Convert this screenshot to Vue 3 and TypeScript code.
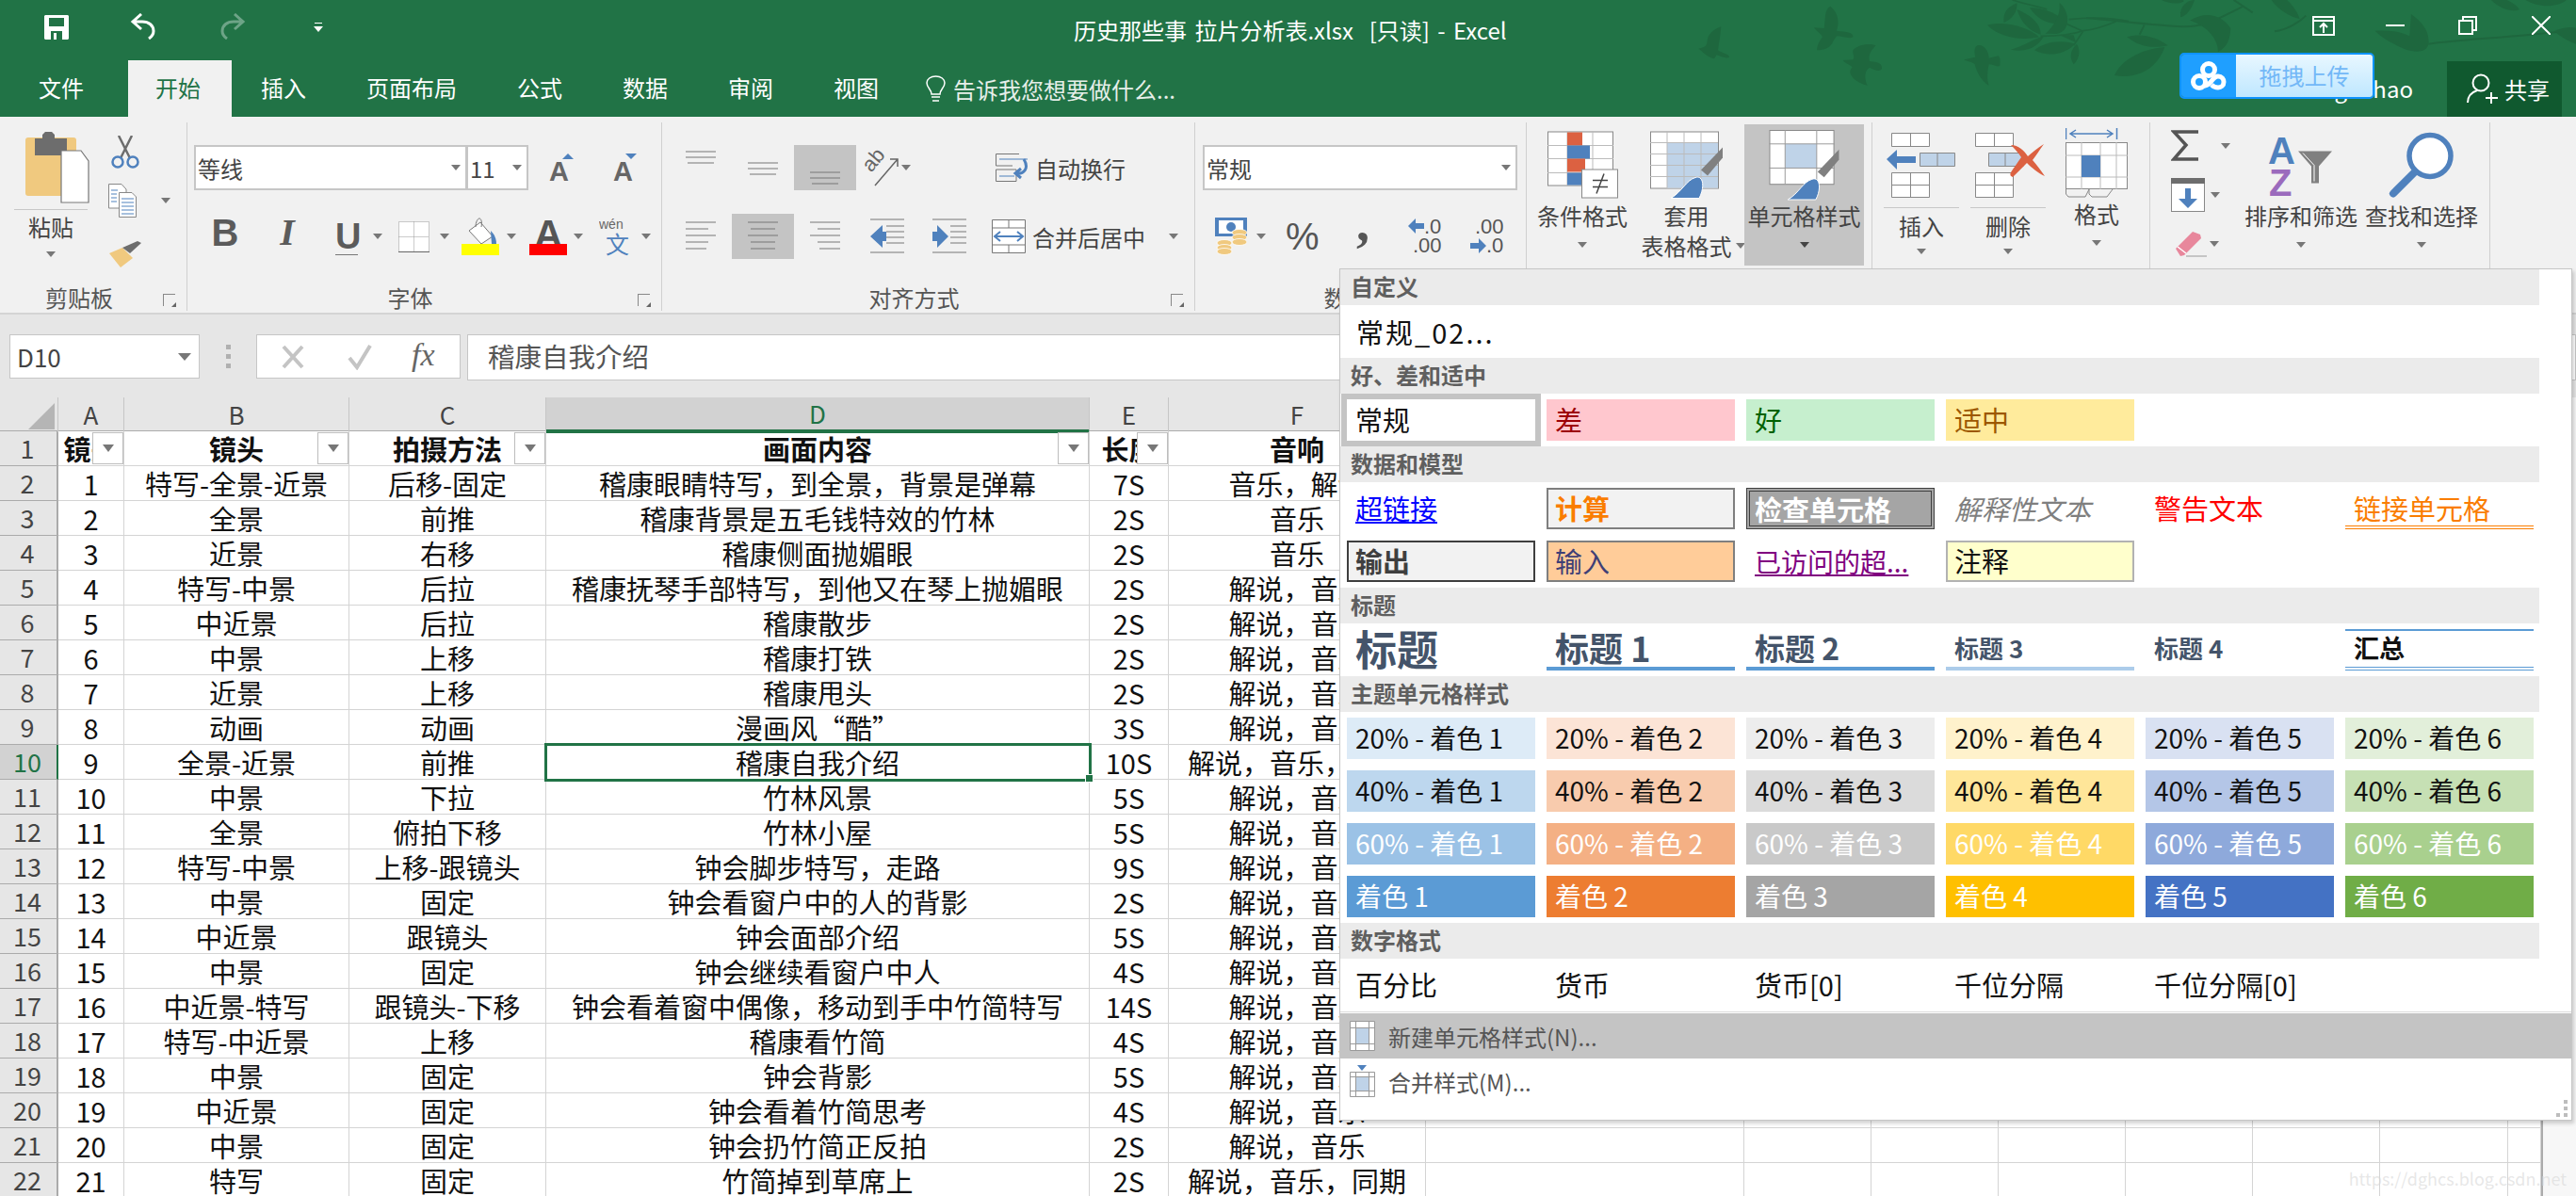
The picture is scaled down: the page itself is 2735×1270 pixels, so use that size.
<template>
  <div class="app">
    <!-- title bar + tabs -->
    <header class="chrome">
      <svg class="leaves" width="2735" height="124" viewBox="0 0 2735 124">
        <g transform="translate(1740 0) scale(0.3333)" fill="#1e673e">
          <path d="M262 85C235 95 220 110 218 130C216 145 215 150 190 155C205 165 215 180 240 187L248 175C262 180 275 187 288 183C290 172 265 170 252 160C256 135 260 110 262 85Z" />
          <path d="M610 20C590 30 595 60 590 90L558 88C565 100 580 105 585 118C575 130 568 145 567 160C590 160 610 155 620 130L630 115C650 115 670 125 682 118C684 102 660 102 630 98C640 70 635 40 610 20Z" />
          <path d="M755 145C730 135 695 145 682 160C680 175 690 180 682 190L650 192C660 205 675 205 680 215C668 225 672 240 690 255C705 265 715 270 728 272C718 250 718 225 735 215C750 222 765 230 774 220C775 205 770 198 735 195C730 175 740 160 755 145Z" />
          <path d="M1078 145C1065 155 1070 170 1072 182L1036 190C1045 197 1060 195 1070 205C1075 225 1090 260 1115 272C1108 250 1110 230 1115 205C1130 205 1140 215 1150 210C1153 195 1150 180 1145 178L1115 185C1115 165 1100 140 1078 145Z" />
          <path d="M1110 80C1160 65 1240 85 1275 118C1220 130 1150 120 1110 80Z" />
          <path d="M1185 158C1220 150 1255 125 1290 115C1275 145 1240 170 1185 158Z" />
          <path d="M1260 160C1290 135 1340 125 1390 140C1360 170 1310 185 1260 160Z" />
          <path d="M1205 30C1240 45 1280 70 1280 110C1245 100 1215 70 1205 30Z" />
          <path d="M1245 25C1290 20 1340 50 1365 70C1320 85 1275 70 1245 25Z" />
          <path d="M1340 8C1365 30 1375 70 1355 95C1335 115 1315 105 1295 108C1320 85 1345 50 1340 8Z" />
          <path d="M1205 10C1165 25 1160 50 1163 72C1190 60 1205 40 1205 10Z" />
          <path d="M1385 205C1370 180 1375 160 1395 140C1410 165 1400 190 1385 205Z" />
          <path d="M1340 112L1385 112L1392 135Z" />
          <path d="M1190 0C1250 20 1280 20 1300 30M1370 62C1430 55 1500 55 1560 68M1280 115C1330 115 1380 110 1415 98C1450 95 1480 85 1520 68M1415 100L1385 145M1360 75L1415 100" fill="none" stroke="#1e673e" stroke-width="5" />
        </g>
        <g transform="translate(2215 0) scale(0.3333)" fill="#1e673e">
          <path d="M0 58C100 65 200 80 310 85C380 85 420 60 500 20M170 110L185 80M1090 140C1200 125 1350 120 1560 95M600 100C640 95 680 70 700 50M470 0L530 40" fill="none" stroke="#1e673e" stroke-width="6" />
          <path d="M90 240C110 190 180 155 250 150C230 210 170 255 90 240Z" />
          <path d="M130 118C170 105 220 115 260 145C210 155 170 150 130 118Z" />
          <path d="M330 65C380 35 430 45 460 90C458 125 450 150 420 165C420 120 380 80 330 65Z" />
          <path d="M300 40C305 10 330 0 345 0C335 30 320 50 300 55Z" />
          <path d="M920 98C960 95 1000 100 1030 115L1035 45C1070 70 1095 100 1090 140C1085 170 1040 170 1000 150C970 135 940 120 920 98Z" />
          <path d="M590 0C610 30 650 55 680 60C670 30 650 10 640 0Z" />
          <path d="M1400 0C1440 25 1500 25 1530 0Z" />
          <path d="M1490 100C1520 85 1550 85 1560 90L1560 140C1530 130 1510 115 1490 100Z" />
          <path d="M1290 0C1320 30 1360 40 1380 30C1370 15 1350 5 1340 0Z" />
          <path d="M240 0C260 10 290 15 310 5L310 0Z" />
        </g>
      </svg>

      <div class="title-row">
        <div class="qat">
          <svg class="qat-save" width="26" height="26" viewBox="0 0 26 26">
            <path d="M1 0H25L26 1V25L25 26H1L0 25V1Z" fill="#fff" />
            <path d="M5 3H21V12H5Z" fill="#217346" />
            <path d="M7 17H19V26H7ZM10 19V26H13V19Z" fill="#217346" fill-rule="evenodd" />
          </svg>
          <svg class="qat-undo" width="28" height="28" viewBox="0 0 28 28" fill="none" stroke="#fff" stroke-width="3">
            <path d="M12 1L3 9L12 17M3 9H13C20 9 25 13 25 19C25 23 23 25 20 27" />
          </svg>
          <svg class="qat-redo" width="28" height="28" viewBox="0 0 28 28" fill="none" stroke="#6da487" stroke-width="3">
            <path d="M16 1L25 9L16 17M25 9H15C8 9 3 13 3 19C3 23 5 25 8 27" />
          </svg>
          <svg class="qat-more" width="10" height="12" viewBox="0 0 10 12">
            <path d="M1 1H9V2H1ZM0 5H10L5 11Z" fill="#fff" />
          </svg>
        </div>
        <div class="doc-title">历史那些事 拉片分析表.xlsx&nbsp; [只读] - Excel</div>
        <div class="win">
          <svg width="24" height="21" viewBox="0 0 24 21" fill="none" stroke="#fff" stroke-width="2">
            <path d="M1 1H23V20H1ZM1 5H23M12 18V9M8 12L12 8L16 12" />
          </svg>
          <svg class="win-min" width="20" height="20" viewBox="0 0 20 20" stroke="#fff" stroke-width="2"><path d="M0 10H20" /></svg>
          <svg class="win-max" width="20" height="20" viewBox="0 0 20 20" fill="none" stroke="#fff" stroke-width="2">
            <path d="M1 5H15V19H1ZM5 5V1H19V15H15" />
          </svg>
          <svg class="win-close" width="20" height="20" viewBox="0 0 20 20" stroke="#fff" stroke-width="2"><path d="M0 0L20 20M20 0L0 20" /></svg>
        </div>
      </div>

      <div class="tab-row">
        <div v-for="t in tabs" :key="t" class="tab" :class="{ active: t === '开始' }">{{ t }}</div>
        <svg class="bulb" width="21" height="28" viewBox="0 0 21 28" fill="none" stroke="#fff" stroke-width="1.5">
          <path d="M6 20C6 15 1 13 1 8C1 4 5 1 10.500 1C16 1 20 4 20 8C20 13 15 15 15 20ZM6 23H15M7 27H14" />
        </svg>
        <div class="tell">告诉我您想要做什么...</div>
        <div class="account">g hao</div>
        <div class="share">
          <svg width="34" height="32" viewBox="0 0 34 32" fill="none" stroke="#fff" stroke-width="2">
            <circle cx="15" cy="10" r="8.500" />
            <path d="M1 31C1 24 5 20 11 18M26 20V32M20 26H33" />
          </svg>
          <span>共享</span>
        </div>
      </div>

      <div class="pan-badge">
        <div class="pan-logo">
          <svg width="38" height="32" viewBox="0 0 38 32" fill="none" stroke="#fff" stroke-width="5">
            <circle cx="19" cy="9" r="6.500" />
            <circle cx="9" cy="22" r="6.500" />
            <path d="M15 26C21 26 23 16 29 16C33 16 35 19 35 22C35 26 32 28 29 28C26 28 24 27 22 25" />
          </svg>
        </div>
        <div class="pan-text">拖拽上传</div>
      </div>
    </header>

    <!-- ribbon -->
    <section class="ribbon">
      <div class="group g-clip">
        <div class="clip-body">
          <div class="paste">
            <svg width="68" height="76" viewBox="0 0 68 76">
              <rect x="0" y="6" width="54" height="62" rx="3" fill="#f0c97f" />
              <path d="M10 12V7H18V3L21 0H28L31 3V7H44V25H10Z" fill="#6d6d6d" />
              <path d="M38 55V20H59L67 31V75H38Z" fill="#fff" stroke="#777" stroke-width="1.200" />
            </svg>
            <div class="paste-rule"></div>
            <div class="paste-label">粘贴</div>
            <i class="caret"></i>
          </div>
          <div class="clip-tools">
            <svg class="scissors" width="30" height="35" viewBox="0 0 30 35" fill="none">
              <path d="M8 0L20 24M22 0L10 24" stroke="#6d6d6d" stroke-width="2.500" />
              <circle cx="7" cy="28" r="5.500" stroke="#4f81bd" stroke-width="2.500" />
              <circle cx="23" cy="28" r="5.500" stroke="#4f81bd" stroke-width="2.500" />
            </svg>
            <div class="copy-row">
              <svg width="30" height="36" viewBox="0 0 30 36" fill="#fff" stroke="#888">
                <path d="M0.500 0.500H14L19 6V26H0.500Z" />
                <path d="M11.500 9.500H25L29.500 14V35.500H11.500Z" />
                <path d="M3 7H10M3 11H9M3 15H9M3 19H9M14 16H27M14 20H27M14 24H27M14 28H27M14 32H27" stroke="#4f81bd" />
              </svg>
              <i class="caret copy-caret"></i>
            </div>
            <svg class="brush" width="34" height="28" viewBox="0 0 34 28">
              <path d="M0 13L14 7L25 18L12 28Z" fill="#f0c97f" />
              <path d="M14 7L22 13L34 2L30 0Z" fill="#6d6d6d" />
            </svg>
          </div>
        </div>
        <div class="group-label">剪贴板</div>
        <i class="launcher"></i>
      </div>

      <div class="group g-font">
        <div class="rows">
          <div class="row r-first">
            <div class="combo font-name"><span>等线</span><i class="caret"></i></div>
            <div class="combo font-size"><span>11</span><i class="caret"></i></div>
            <svg class="grow" width="27" height="32" viewBox="0 0 27 32">
              <path d="M20 1L26 7H14Z" fill="#4f81bd" />
              <text x="0" y="30" class="glyph">A</text>
            </svg>
            <svg class="shrink" width="27" height="32" viewBox="0 0 27 32">
              <path d="M19 7L25 1H13Z" fill="#4f81bd" />
              <text x="0" y="30" class="glyph">A</text>
            </svg>
          </div>
          <div class="row font-tools">
            <div class="btn glyph-b">B</div>
            <div class="btn glyph-i">I</div>
            <div class="u-tool ml18">U</div>
            <i class="caret ml16"></i>
            <svg class="ml17" width="33" height="33" viewBox="0 0 33 33" fill="#fff" stroke="#999" stroke-dasharray="1 1">
              <path d="M0.500 0.500H32.500V32.500H0.500ZM16.500 0.500V32.500M0.500 16.500H32.500" />
              <path d="M0 32.500H33" stroke="#666" stroke-dasharray="none" />
            </svg>
            <i class="caret ml11"></i>
            <svg class="ml13" width="40" height="40" viewBox="0 0 40 40">
              <path d="M20 5L33 20L21 28L8 14Z" fill="#fff" stroke="#777" />
              <path d="M15 10C15 5 17 1 19 1C21 1 22 5 21 10" fill="none" stroke="#777" />
              <path d="M31 14C35 18 37 22 37 28H32Z" fill="#4f81bd" />
              <rect x="0" y="28" width="40" height="12" fill="#ff0" />
            </svg>
            <i class="caret ml8"></i>
            <svg class="ml14" width="40" height="40" viewBox="0 0 40 40">
              <text x="5" y="32" class="glyph-lg">A</text>
              <rect x="0" y="28" width="40" height="12" fill="#f00" />
            </svg>
            <i class="caret ml7"></i>
            <svg class="ml17" width="34" height="42" viewBox="0 0 34 42">
              <text x="0" y="13" class="wen">wén</text>
              <text x="7" y="39" class="wen-zi">文</text>
            </svg>
            <i class="caret ml11"></i>
          </div>
        </div>
        <div class="group-label">字体</div>
        <i class="launcher"></i>
      </div>

      <div class="group g-align">
        <div class="rows">
          <div class="row">
            <div v-for="a in vAligns" :key="a.cls" class="btn" :class="[a.cls, { on: a.on }]">
              <svg width="32" height="14" viewBox="0 0 32 14" stroke="#777"><path d="M0 1H32M0 7H32M2 13H30" /></svg>
            </div>
            <div class="btn orient">
              <svg width="38" height="42" viewBox="0 0 38 42" fill="none" stroke="#666" stroke-width="1.500">
                <path d="M12 40L36 12M28 12H36V20" />
                <text x="2" y="22" transform="rotate(-50 10 18)" class="ab">ab</text>
              </svg>
              <i class="caret"></i>
            </div>
            <div class="cmd wrap-cmd">
              <svg width="36" height="30" viewBox="0 0 36 30" fill="none" stroke="#777">
                <path d="M0.500 0.500H25M0.500 0.500V13H18M0.500 17H22V29.500H0.500Z" />
                <path d="M4 6H34M4 24H20" stroke="#4f81bd" />
                <path d="M30 6C36 16 30 22 22 21M27 16L21 21L27 26" stroke="#4f81bd" stroke-width="3" />
              </svg>
              <span>自动换行</span>
            </div>
          </div>
          <div class="row">
            <div class="btn">
              <svg width="32" height="32" viewBox="0 0 32 32" stroke="#777"><path d="M0 1H32M0 8H24M0 15H32M0 22H24M0 29H22" /></svg>
            </div>
            <div class="btn on">
              <svg width="34" height="32" viewBox="0 0 34 32" stroke="#777"><path d="M1 1H33M4 8H30M1 15H33M4 22H30M4 29H30" /></svg>
            </div>
            <div class="btn">
              <svg width="32" height="32" viewBox="0 0 32 32" stroke="#777"><path d="M0 1H32M8 8H32M0 15H32M8 22H32M10 29H32" /></svg>
            </div>
            <div class="btn">
              <svg width="36" height="38" viewBox="0 0 36 38" stroke="#777">
                <path d="M0 1H36M17 8H36M17 14H36M17 20H36M17 26H36M0 36H36" />
                <path d="M0 19L13 7V14H17V24H13V31Z" fill="#4f81bd" stroke="none" />
              </svg>
            </div>
            <div class="btn">
              <svg width="36" height="38" viewBox="0 0 36 38" stroke="#777">
                <path d="M0 1H36M19 8H36M19 14H36M19 20H36M19 26H36M0 36H36" />
                <path d="M17 19L5 7V14H0V24H5V31Z" fill="#4f81bd" stroke="none" />
              </svg>
            </div>
            <div class="cmd merge-cmd">
              <svg width="36" height="36" viewBox="0 0 36 36" fill="#fff" stroke="#777">
                <path d="M0.500 0.500H35.500V35.500H0.500ZM0.500 9H35.500M0.500 27H35.500M18 0.500V9M18 27V35.500" />
                <path d="M3 18H33M9 13L3 18L9 23M27 13L33 18L27 23" fill="none" stroke="#4f81bd" stroke-width="2" />
              </svg>
              <span>合并后居中</span>
              <i class="caret merge-caret"></i>
            </div>
          </div>
        </div>
        <div class="group-label">对齐方式</div>
        <i class="launcher"></i>
      </div>

      <div class="group g-num">
        <div class="rows">
          <div class="row r-first">
            <div class="combo num-format"><span>常规</span><i class="caret"></i></div>
          </div>
          <div class="row num-tools">
            <svg class="ml21" width="34" height="40" viewBox="0 0 34 40">
              <rect x="0" y="0" width="34" height="20" fill="#4f81bd" />
              <path d="M4 3H30V17H4Z" fill="#fff" />
              <circle cx="17" cy="10" r="5" fill="#4f81bd" />
              <g fill="#f0c97f" stroke="#fff" stroke-width="0.800">
                <ellipse cx="26" cy="16" rx="8" ry="3.500" /><ellipse cx="26" cy="21" rx="8" ry="3.500" /><ellipse cx="26" cy="26" rx="8" ry="3.500" />
                <ellipse cx="10" cy="27" rx="8" ry="3.500" /><ellipse cx="10" cy="32" rx="8" ry="3.500" /><ellipse cx="10" cy="36" rx="8" ry="3.500" />
              </g>
            </svg>
            <i class="caret ml10"></i>
            <div class="pct ml21">%</div>
            <div class="comma ml44">,</div>
            <svg class="ml41" width="36" height="38" viewBox="0 0 36 38">
              <path d="M0 8L8 0V5H17V11H8V16Z" fill="#4f81bd" />
              <text x="17" y="16" class="dec">.0</text>
              <text x="5" y="36" class="dec">.00</text>
            </svg>
            <svg class="ml30" width="36" height="38" viewBox="0 0 36 38">
              <text x="5" y="16" class="dec">.00</text>
              <path d="M17 29L9 21V26H0V32H9V37Z" fill="#4f81bd" />
              <text x="17" y="36" class="dec">.0</text>
            </svg>
          </div>
        </div>
        <div class="group-label">数字</div>
      </div>

      <div class="group g-styles">
        <div class="big b-cond">
          <svg width="75" height="72" viewBox="0 0 75 72" class="ico">
            <rect x="0.500" y="0.500" width="69" height="57" fill="#fff" stroke="#888" />
            <path d="M21 0V58M48 0V58M0 15H70M0 29H70M0 44H70" stroke="#bbb" />
            <rect x="21" y="1" width="16" height="14" fill="#dc6141" />
            <rect x="21" y="15" width="24" height="14" fill="#4f81bd" />
            <rect x="21" y="29" width="19" height="14" fill="#dc6141" />
            <rect x="21" y="44" width="16" height="13" fill="#4f81bd" />
            <rect x="36.500" y="40.500" width="38" height="30" fill="#fff" stroke="#888" />
            <path d="M48 52H64M48 59H64M52 66L60 45" stroke="#444" stroke-width="1.500" />
          </svg>
          <div class="big-text">条件格式</div>
          <i class="caret big-caret"></i>
        </div>
        <div class="big b-table">
          <svg width="78" height="72" viewBox="0 0 78 72" class="ico">
            <rect x="0.500" y="0.500" width="72" height="60" fill="#fff" stroke="#888" />
            <rect x="18" y="12" width="54" height="48" fill="#bfd3e8" />
            <path d="M18 0V60M36 0V60M54 0V60M0 12H72M0 24H72M0 36H72M0 48H72" stroke="#bbb" />
            <path d="M77 17V28L61 47L54 41Z" fill="#808080" />
            <path d="M22 71C34 64 38 52 48 49C57 46 58 60 52 71Z" fill="#4f81bd" stroke="#fff" />
          </svg>
          <div class="big-text">套用</div>
          <div class="big-text with-caret">表格格式<i class="caret"></i></div>
        </div>
        <div class="big b-cell on">
          <svg width="76" height="76" viewBox="0 0 76 76" class="ico">
            <rect x="0.500" y="0.500" width="69" height="58" fill="#fff" stroke="#888" />
            <rect x="17" y="15" width="34" height="26" fill="#bfd3e8" />
            <path d="M17 0V58M51 0V58M0 15H70M0 41H70" stroke="#999" />
            <path d="M75 21V32L59 51L52 45Z" fill="#808080" />
            <path d="M20 75C32 68 36 56 46 53C55 50 56 64 50 75Z" fill="#4f81bd" stroke="#fff" />
          </svg>
          <div class="big-text">单元格样式</div>
          <i class="caret dark big-caret"></i>
        </div>
      </div>

      <div class="group g-cells">
        <div class="big b-ins">
          <svg width="74" height="70" viewBox="0 0 74 70" class="ico ico-short">
            <path d="M5.500 1.500H45.500V15.500H5.500ZM25.500 1.500V15.500M5.500 43.500H45.500V69.500H5.500ZM25.500 43.500V69.500M5.500 56.500H45.500" fill="#fff" stroke="#888" />
            <path d="M35.500 22.500H72.500V36.500H35.500ZM54 22.500V36.500" fill="#bfd3e8" stroke="#888" />
            <path d="M0 29L11 19V26H31V33H11V40Z" fill="#4f81bd" />
          </svg>
          <div class="split-rule"></div>
          <div class="big-text">插入</div>
          <i class="caret split-caret"></i>
        </div>
        <div class="big b-del">
          <svg width="78" height="70" viewBox="0 0 78 70" class="ico ico-short">
            <path d="M4.500 1.500H44.500V15.500H4.500ZM24.500 1.500V15.500M4.500 43.500H44.500V69.500H4.500ZM24.500 43.500V69.500M4.500 56.500H44.500" fill="#fff" stroke="#888" />
            <path d="M18.500 22.500H55V36.500H18.500ZM36 22.500V36.500" fill="#bfd3e8" stroke="#888" />
            <path d="M42 14C50 14 56 20 60 26C65 22 70 17 77 13C72 20 68 26 65 30C70 36 74 41 78 47C71 44 64 38 59 33C54 38 48 44 44 48C41 47 41 45 42 43C45 38 49 33 53 27C50 22 46 18 42 14Z" fill="#dc6141" />
          </svg>
          <div class="split-rule"></div>
          <div class="big-text">删除</div>
          <i class="caret split-caret"></i>
        </div>
        <div class="big b-fmt">
          <svg width="66" height="75" viewBox="0 0 66 75" class="ico">
            <path d="M0.500 0V12M54.500 0V12M5 6H50M11 2L5 6L11 10M44 2L50 6L44 10" fill="none" stroke="#4f81bd" stroke-width="1.500" />
            <rect x="0.500" y="15.500" width="65" height="49" fill="#fff" stroke="#888" />
            <path d="M17 15V65M37 15V65M54 15V65M0 29H66M0 52H66" stroke="#bbb" />
            <rect x="17" y="29" width="20" height="23" fill="#4f81bd" />
            <path d="M0.500 65V70L3 73H21L25 65M25 65L25 70L28 73H44L50 65" fill="none" stroke="#888" />
          </svg>
          <div class="big-text">格式</div>
          <i class="caret big-caret"></i>
        </div>
      </div>

      <div class="group g-edit">
        <div class="edit-small">
          <div class="edit-line l-sum">
            <svg width="30" height="33" viewBox="0 0 30 33" fill="none" stroke="#555" stroke-width="3.500">
              <path d="M29 2H3L16 16L3 31H29" />
            </svg>
            <i class="caret sum-caret"></i>
          </div>
          <div class="edit-line l-fill">
            <svg width="36" height="36" viewBox="0 0 36 36">
              <rect x="0.500" y="0.500" width="35" height="35" fill="#fff" stroke="#888" />
              <rect x="0" y="0" width="36" height="6" fill="#6d6d6d" />
              <path d="M15 11H21V22H28L18 32L8 22H15Z" fill="#4f81bd" />
            </svg>
            <i class="caret fill-caret"></i>
          </div>
          <div class="edit-line l-erase">
            <svg width="34" height="28" viewBox="0 0 34 28">
              <path d="M0 19L18 1L26 4L27 8L9 26L5 27Z" fill="#e8879c" />
              <path d="M2 17L11 24" stroke="#fff" stroke-width="1.500" />
              <path d="M11 27H33" stroke="#999" />
            </svg>
            <i class="caret erase-caret"></i>
          </div>
        </div>
        <div class="big b-sort">
          <svg width="70" height="66" viewBox="0 0 70 66" class="ico">
            <text x="0" y="31" class="az-a">A</text>
            <text x="1" y="65" class="az-z">Z</text>
            <path d="M32 18H68L54 34V52H46V34Z" fill="#808080" />
            <path d="M37 20L49 33V50" fill="none" stroke="#fff" />
          </svg>
          <div class="big-text">排序和筛选</div>
          <i class="caret big-caret"></i>
        </div>
        <div class="big b-find">
          <svg width="70" height="70" viewBox="0 0 70 70" class="ico">
            <circle cx="44" cy="25" r="22" fill="#fff" stroke="#4f81bd" stroke-width="5.500" />
            <path d="M28 42L5 65" stroke="#4f81bd" stroke-width="8" stroke-linecap="round" />
          </svg>
          <div class="big-text">查找和选择</div>
          <i class="caret big-caret"></i>
        </div>
      </div>
    </section>

    <!-- formula bar -->
    <section class="formula">
      <div class="name-box"><span>D10</span><i class="caret"></i></div>
      <div class="dots"><i></i><i></i><i></i></div>
      <div class="fx-btns">
        <svg width="24" height="28" viewBox="0 0 24 28" stroke="#c4c4c4" stroke-width="4"><path d="M2 3L22 25M22 3L2 25" /></svg>
        <svg width="26" height="28" viewBox="0 0 26 28" fill="none" stroke="#c4c4c4" stroke-width="4"><path d="M2 15L10 25L24 2" /></svg>
        <span class="fx">fx</span>
      </div>
      <div class="fx-input">稽康自我介绍</div>
    </section>

    <!-- sheet -->
    <section class="sheet-wrap">
      <div class="sheet">
        <div class="grid-row col-heads">
          <div class="corner"><i></i></div>
          <div v-for="c in colHeads" :key="c.key" class="col-head" :class="{ sel: c.key === 'D' }">{{ c.name }}</div>
        </div>
        <div class="grid-row head-row">
          <div class="row-head">1</div>
          <div v-for="(h, i) in headers" :key="i" class="cell bold">
            {{ h }}
            <span class="filter"><i class="caret"></i></span>
          </div>
          <div v-for="n in emptyCols" :key="n" class="cell"></div>
        </div>
        <div v-for="(r, i) in rows" :key="i" class="grid-row">
          <div class="row-head" :class="{ sel: i === 8 }">{{ i + 2 }}</div>
          <div class="cell">{{ i + 1 }}</div>
          <div class="cell">{{ r[0] }}</div>
          <div class="cell">{{ r[1] }}</div>
          <div class="cell" :class="{ active: i === 8 }">{{ r[2] }}</div>
          <div class="cell">{{ r[3] }}</div>
          <div class="cell">{{ r[4] }}</div>
          <div v-for="n in emptyCols" :key="n" class="cell"></div>
        </div>
      </div>
      <div class="vscroll"></div>
    </section>

    <!-- cell styles gallery -->
    <div class="gallery">
      <div class="sec">自定义</div>
      <div class="custom-row">常规_02...</div>

      <div class="sec">好、差和适中</div>
      <div class="tiles">
        <div class="tile selected">常规</div>
        <div class="tile bad">差</div>
        <div class="tile good">好</div>
        <div class="tile neutral">适中</div>
      </div>

      <div class="sec">数据和模型</div>
      <div class="tiles">
        <div class="tile"><span class="link">超链接</span></div>
        <div class="tile calc">计算</div>
        <div class="tile check">检查单元格</div>
        <div class="tile explain">解释性文本</div>
        <div class="tile warn">警告文本</div>
        <div class="tile linked">链接单元格</div>
        <div class="tile output">输出</div>
        <div class="tile input">输入</div>
        <div class="tile"><span class="visited">已访问的超...</span></div>
        <div class="tile note">注释</div>
      </div>

      <div class="sec">标题</div>
      <div class="tiles">
        <div class="tile h0">标题</div>
        <div class="tile h1">标题 1</div>
        <div class="tile h2">标题 2</div>
        <div class="tile h3">标题 3</div>
        <div class="tile h4">标题 4</div>
        <div class="tile total">汇总</div>
      </div>

      <div class="sec">主题单元格样式</div>
      <div class="tiles theme">
        <div
          v-for="t in themeTiles"
          :key="t.label"
          class="tile"
          :class="{ light: t.light }"
          :style="{ backgroundColor: t.color }"
        >{{ t.label }}</div>
      </div>

      <div class="sec">数字格式</div>
      <div class="tiles numbers">
        <div v-for="n in numberTiles" :key="n" class="tile">{{ n }}</div>
      </div>

      <div class="menu-sep"></div>
      <div class="menu-item hot">
        <svg width="30" height="32" viewBox="0 0 30 32" fill="#fff" stroke="#999">
          <path d="M2.500 0.500H28.500V31.500H2.500ZM8.500 0.500V31.500M22.500 0.500V31.500M2.500 7.500H28.500M2.500 24.500H28.500" />
          <rect x="9" y="8" width="13" height="16" fill="#bfd3e8" stroke="none" />
        </svg>
        <span>新建单元格样式(N)...</span>
      </div>
      <div class="menu-item">
        <svg width="30" height="34" viewBox="0 0 30 34" fill="#fff" stroke="#999">
          <path d="M2.500 7.500H28.500V33.500H2.500ZM8.500 7.500V33.500M22.500 7.500V33.500M2.500 12.500H28.500M2.500 27.500H28.500" />
          <rect x="9" y="13" width="13" height="14" fill="#bfd3e8" stroke="none" />
          <path d="M10 0H20L15 6Z" fill="#4f81bd" stroke="none" />
        </svg>
        <span>合并样式(M)...</span>
      </div>
      <svg class="grip" width="16" height="18" viewBox="0 0 16 18" fill="#bdbdbd">
        <rect x="11" y="0" width="4" height="4" /><rect x="11" y="7" width="4" height="4" /><rect x="11" y="14" width="4" height="4" /><rect x="3" y="14" width="4" height="4" />
      </svg>
    </div>

    <div class="watermark">https://dghcs.blog.csdn.net</div>
  </div>
</template>

<script setup lang="ts">
interface ThemeTile {
  label: string
  color: string
  light: boolean
}

const tabs = ['文件', '开始', '插入', '页面布局', '公式', '数据', '审阅', '视图']

const vAligns = [
  { cls: 'va-top', on: false },
  { cls: 'va-mid', on: false },
  { cls: 'va-bot', on: true },
]

const colHeads = 'ABCDEF'.split('').map(name => ({ key: name, name }))
  .concat('GHIJKLMN'.split('').map(name => ({ key: name, name: '' })))

const headers = ['镜头', '镜头', '拍摄方法', '画面内容', '长度', '音响']
const emptyCols = 8

const rows: string[][] = [
  ['特写-全景-近景', '后移-固定', '稽康眼睛特写，到全景，背景是弹幕', '7S', '音乐，解说'],
  ['全景', '前推', '稽康背景是五毛钱特效的竹林', '2S', '音乐'],
  ['近景', '右移', '稽康侧面抛媚眼', '2S', '音乐'],
  ['特写-中景', '后拉', '稽康抚琴手部特写，到他又在琴上抛媚眼', '2S', '解说，音乐'],
  ['中近景', '后拉', '稽康散步', '2S', '解说，音乐'],
  ['中景', '上移', '稽康打铁', '2S', '解说，音乐'],
  ['近景', '上移', '稽康甩头', '2S', '解说，音乐'],
  ['动画', '动画', '漫画风“酷”', '3S', '解说，音乐'],
  ['全景-近景', '前推', '稽康自我介绍', '10S', '解说，音乐，同期'],
  ['中景', '下拉', '竹林风景', '5S', '解说，音乐'],
  ['全景', '俯拍下移', '竹林小屋', '5S', '解说，音乐'],
  ['特写-中景', '上移-跟镜头', '钟会脚步特写，走路', '9S', '解说，音乐'],
  ['中景', '固定', '钟会看窗户中的人的背影', '2S', '解说，音乐'],
  ['中近景', '跟镜头', '钟会面部介绍', '5S', '解说，音乐'],
  ['中景', '固定', '钟会继续看窗户中人', '4S', '解说，音乐'],
  ['中近景-特写', '跟镜头-下移', '钟会看着窗中偶像，移动到手中竹简特写', '14S', '解说，音乐'],
  ['特写-中近景', '上移', '稽康看竹简', '4S', '解说，音乐'],
  ['中景', '固定', '钟会背影', '5S', '解说，音乐'],
  ['中近景', '固定', '钟会看着竹简思考', '4S', '解说，音乐'],
  ['中景', '固定', '钟会扔竹简正反拍', '2S', '解说，音乐'],
  ['特写', '固定', '竹简掉到草席上', '2S', '解说，音乐，同期'],
]

const palette: { prefix: string; colors: string[]; light: boolean }[] = [
  { prefix: '20% - ', colors: ['#ddebf7', '#fce4d6', '#ededed', '#fff2cc', '#d9e1f2', '#e2efda'], light: false },
  { prefix: '40% - ', colors: ['#bdd7ee', '#f8cbad', '#dbdbdb', '#ffe699', '#b4c6e7', '#c6e0b4'], light: false },
  { prefix: '60% - ', colors: ['#9bc2e6', '#f4b084', '#c9c9c9', '#ffd966', '#8ea9db', '#a9d08e'], light: true },
  { prefix: '', colors: ['#5b9bd5', '#ed7d31', '#a5a5a5', '#ffc000', '#4472c4', '#70ad47'], light: true },
]

const themeTiles: ThemeTile[] = palette.flatMap(p =>
  p.colors.map((color, i) => ({ label: `${p.prefix}着色 ${i + 1}`, color, light: p.light })),
)

const numberTiles = ['百分比', '货币', '货币[0]', '千位分隔', '千位分隔[0]']
</script>

<style>
html, body {
  margin: 0;
  overflow: hidden;
  background: #fff;
}
</style>

<style scoped>
.app {
  position: relative;
  width: 2735px;
  height: 1270px;
  overflow: hidden;
  font-family: "Noto Sans CJK SC", "Liberation Sans", sans-serif;
  color: #444;
}

i { display: block; font-style: normal; }
svg { display: block; flex: none; }

.caret {
  flex: none;
  width: 0;
  height: 0;
  border-left: 5px solid transparent;
  border-right: 5px solid transparent;
  border-top: 6px solid #777;
}
.caret.dark { border-top-color: #444; }

.ml7 { margin-left: 7px; }
.ml8 { margin-left: 8px; }
.ml10 { margin-left: 10px; }
.ml11 { margin-left: 11px; }
.ml13 { margin-left: 13px; }
.ml14 { margin-left: 14px; }
.ml16 { margin-left: 16px; }
.ml17 { margin-left: 17px; }
.ml18 { margin-left: 18px; }
.ml21 { margin-left: 21px; }
.ml30 { margin-left: 30px; }
.ml41 { margin-left: 41px; }
.ml44 { margin-left: 44px; }

/* ---- title bar ---- */
.chrome {
  position: relative;
  height: 124px;
  background: #217346;
  color: #fff;
  font-size: 24px;
}
.leaves { position: absolute; left: 0; top: 0; }

.title-row {
  position: relative;
  height: 64px;
  display: flex;
  align-items: center;
}
.qat { display: flex; align-items: center; width: 1140px; flex: none; }
.qat-save { margin-left: 47px; margin-top: -6px; }
.qat-undo { margin-left: 65px; margin-top: -8px; }
.qat-redo { margin-left: 67px; margin-top: -8px; }
.qat-more { margin-left: 72px; margin-top: -6px; }
.doc-title { flex: none; width: 1315px; white-space: nowrap; line-height: 64px; word-spacing: 3px; }
.win { display: flex; align-items: center; margin-top: -10px; }
.win-min { margin-left: 54px; }
.win-max { margin-left: 57px; }
.win-close { margin-left: 58px; }

.tab-row {
  position: relative;
  height: 60px;
  display: flex;
  align-items: center;
}
.tab {
  height: 60px;
  line-height: 58px;
  padding: 0 32px;
  white-space: nowrap;
}
.tab:first-child { margin-left: 9px; }
.tab.active {
  margin-left: 15px;
  padding: 0 33px 0 29px;
  background: #f1f1f1;
  color: #217346;
}
.tab.active + .tab { padding-left: 31px; }
.bulb { margin-left: 18px; }
.tell { margin-left: 8px; white-space: nowrap; color: #e6efe9; }
.account {
  margin-left: auto;
  white-space: nowrap;
  word-spacing: 22px;
  margin-right: 36px;
  line-height: 60px;
}
.share {
  display: flex;
  align-items: center;
  gap: 6px;
  width: 122px;
  height: 59px;
  margin-right: 15px;
  padding-left: 21px;
  box-sizing: border-box;
  background: #10592f;
}
.pan-badge {
  position: absolute;
  left: 2314px;
  top: 56px;
  width: 207px;
  height: 49px;
  display: flex;
  box-sizing: border-box;
  border: 2px solid #0e93ff;
  border-radius: 5px;
  overflow: hidden;
}
.pan-logo {
  width: 58px;
  background: #1f9fff;
  display: flex;
  align-items: center;
  justify-content: center;
}
.pan-text {
  flex: 1;
  text-align: center;
  line-height: 44px;
  color: #73b8f7;
  background: linear-gradient(#e8f7ff, #bfe7ff);
}

/* ---- ribbon ---- */
.ribbon {
  display: flex;
  height: 210px;
  box-sizing: border-box;
  background: #f1f1f1;
  border-bottom: 2px solid #d4d4d4;
  font-size: 24px;
}
.group {
  position: relative;
  flex: none;
  height: 200px;
  margin-top: 6px;
  box-sizing: border-box;
  border-right: 1px solid #d0d0d0;
}
.g-clip { width: 199px; }
.g-font { width: 504px; padding-left: 7px; }
.g-align { width: 566px; padding-left: 8px; }
.g-num { width: 352px; }
.g-styles { width: 367px; padding: 2px 0 0 9px; display: flex; }
.g-cells { width: 295px; padding: 2px 0 0 7px; display: flex; }
.g-edit { width: 361px; padding: 2px 0 0 22px; display: flex; }

.group-label {
  position: absolute;
  left: 0;
  right: 30px;
  top: 170px;
  text-align: center;
  line-height: 32px;
  color: #555;
}
.launcher {
  position: absolute;
  right: 12px;
  top: 182px;
  width: 12px;
  height: 12px;
  border-left: 1px solid #888;
  border-top: 1px solid #888;
}
.launcher::after {
  content: "";
  position: absolute;
  right: -1px;
  bottom: -1px;
  border-left: 5px solid transparent;
  border-bottom: 5px solid #666;
}

.rows { padding-top: 24px; display: flex; flex-direction: column; gap: 25px; }
.row { display: flex; align-items: center; height: 48px; }
.btn {
  flex: none;
  width: 66px;
  height: 48px;
  display: flex;
  align-items: center;
  justify-content: center;
}
.btn.on { background: #c4c4c4; }
.va-top { align-items: flex-start; padding-top: 6px; height: 42px; }
.va-mid { align-items: flex-start; padding-top: 18px; height: 30px; }
.va-bot { align-items: flex-end; padding-bottom: 6px; height: 42px; }
.orient { gap: 2px; }

.combo {
  display: flex;
  align-items: center;
  justify-content: space-between;
  height: 48px;
  box-sizing: border-box;
  background: #fff;
  border: 2px solid #c6c6c6;
  padding: 0 5px 0 2px;
  color: #444;
}
.font-name { width: 290px; }
.font-size { width: 66px; margin-left: -1px; }
.num-format { width: 334px; margin-left: 8px; }
.grow { margin-left: 22px; }
.shrink { margin-left: 41px; }
.glyph { font: bold 29px "Liberation Sans", sans-serif; fill: #666; }
.glyph-lg { font: bold 42px "Liberation Sans", sans-serif; fill: #555; }
.glyph-b { font: bold 40px/40px "Liberation Sans", sans-serif; color: #5b5b5b; padding-bottom: 8px; height: 40px; }
.glyph-i { font: italic bold 40px/40px "Liberation Serif", serif; color: #5b5b5b; padding-bottom: 8px; height: 40px; }
.u-tool {
  width: 24px;
  font: bold 38px/38px "Liberation Sans", sans-serif;
  color: #5b5b5b;
  border-bottom: 1px solid #777;
  text-align: center;
  margin-left: 18px;
}
.wen { font: 14px "Liberation Sans", sans-serif; fill: #666; }
.wen-zi { font-size: 25px; fill: #4f81bd; }
.ab { font: 22px "Liberation Sans", sans-serif; fill: #666; stroke: none; }

.clip-body { display: flex; padding-top: 10px; }
.paste {
  display: flex;
  flex-direction: column;
  align-items: center;
  width: 78px;
  margin-left: 15px;
}
.paste svg { align-self: flex-start; margin-left: 12px; }
.paste-rule { width: 78px; height: 1px; margin-top: 6px; background: #c8c8c8; }
.paste-label { line-height: 36px; margin-top: 0; }
.paste .caret { margin-top: 8px; }
.clip-tools { margin-left: 22px; }
.scissors { margin-left: 3px; margin-top: 4px; }
.copy-row { display: flex; align-items: center; margin-top: 16px; }
.copy-caret { margin-left: 26px; }
.brush { margin-top: 25px; margin-left: 1px; }

.cmd { display: flex; align-items: center; white-space: nowrap; }
.wrap-cmd { margin-left: 82px; gap: 6px; }
.merge-cmd { margin-left: 12px; gap: 7px; }
.merge-caret { margin-left: 18px; }

.pct { font: 40px/48px "Liberation Sans", sans-serif; color: #555; width: 31px; }
.comma { font: bold 56px/18px "Liberation Serif", serif; color: #555; width: 14px; height: 48px; }
.dec { font: 22px "Liberation Sans", sans-serif; fill: #555; }

.big {
  display: flex;
  flex-direction: column;
  align-items: center;
  height: 150px;
  flex: none;
  box-sizing: border-box;
  padding-top: 6px;
  white-space: nowrap;
}
.big.on { background: #c4c4c4; }
.ico { height: 75px; align-self: center; }
.big-text { line-height: 32px; margin-top: 0; color: #444; }
.big-caret { margin-top: 12px; }
.with-caret { display: flex; align-items: center; gap: 4px; margin-left: 14px; }
.b-cond { width: 100px; }
.b-table { width: 115px; margin-left: 3px; }
.b-cell { width: 127px; margin-left: 4px; }
.b-ins { width: 90px; }
.b-del { width: 90px; margin-left: 2px; }
.b-fmt { width: 66px; margin-left: 16px; padding-top: 4px; }
.ico-short { height: 70px; margin-top: 2px; }
.split-rule { width: 80px; height: 1px; margin-top: 10px; margin-bottom: 3px; background: #c8c8c8; }
.split-caret { margin-top: 8px; }
.b-sort { width: 122px; margin-left: 19px; }
.b-find { width: 122px; margin-left: 6px; }

.edit-small { width: 58px; flex: none; }
.edit-line { display: flex; align-items: center; }
.l-sum { margin-top: 6px; }
.l-fill { margin-top: 18px; }
.l-erase { margin-top: 20px; margin-left: 5px; }
.sum-caret { margin-left: 23px; }
.fill-caret { margin-left: 6px; }
.erase-caret { margin-left: 2px; }

/* ---- formula bar ---- */
.formula {
  display: flex;
  height: 88px;
  box-sizing: border-box;
  padding-top: 21px;
  background: #e6e6e6;
}
.name-box {
  display: flex;
  align-items: center;
  justify-content: space-between;
  width: 202px;
  height: 47px;
  margin-left: 10px;
  padding: 0 8px 0 7px;
  box-sizing: border-box;
  background: #fff;
  border: 1px solid #c6c6c6;
  font-size: 26px;
  color: #444;
}
.name-box .caret { border-left-width: 7px; border-right-width: 7px; border-top-width: 8px; }
.dots {
  width: 60px;
  display: flex;
  flex-direction: column;
  align-items: center;
  justify-content: center;
  gap: 5px;
  height: 47px;
}
.dots i { width: 5px; height: 5px; background: #b0b0b0; }
.fx-btns {
  width: 217px;
  height: 47px;
  box-sizing: border-box;
  background: #fff;
  border: 1px solid #c6c6c6;
  display: flex;
  align-items: center;
  padding-left: 26px;
  gap: 46px;
}
.fx { font: italic 34px "Liberation Serif", serif; color: #666; margin-top: -4px; margin-left: -4px; }
.fx-input {
  flex: 1;
  height: 47px;
  line-height: 44px;
  margin-left: 7px;
  padding-left: 21px;
  background: #fff;
  border: 1px solid #c6c6c6;
  font-size: 28.500px;
  color: #555;
}

/* ---- sheet ---- */
.sheet-wrap { display: flex; height: 848px; overflow: hidden; background: #fff; }
.sheet { width: 2698px; flex: none; }
.vscroll { flex: 1; background: #f7f7f7; border-left: 2px solid #ababab; }
.grid-row {
  display: grid;
  grid-template-columns: 62px 70px 239px 209px 577px 84px 273px 338px 135px 135px 135px 135px 135px 136px 35px;
  height: 37px;
}
.col-heads { border-bottom: 1px solid #ababab; box-sizing: border-box; height: 36px; background: #e6e6e6; }
.corner { position: relative; border-right: 1px solid #c6c6c6; }
.corner i {
  position: absolute;
  right: 3px;
  bottom: 3px;
  border-left: 28px solid transparent;
  border-bottom: 28px solid #b5b5b5;
}
.col-head {
  border-right: 1px solid #c6c6c6;
  text-align: center;
  font-size: 26px;
  line-height: 36px;
  color: #444;
}
.col-head.sel {
  background: #d2d2d2;
  color: #217346;
  border-bottom: 4px solid #217346;
  margin-bottom: -1px;
  line-height: 34px;
}
.row-head {
  background: #e6e6e6;
  border-right: 2px solid #ababab;
  border-bottom: 1px solid #ababab;
  text-align: center;
  font-size: 27px;
  line-height: 36px;
  color: #444;
  padding-right: 2px;
}
.row-head.sel { background: #d2d2d2; color: #217346; border-right-color: #217346; }
.cell {
  position: relative;
  box-sizing: border-box;
  height: 37px;
  border-right: 1px solid #d4d4d4;
  border-bottom: 1px solid #d4d4d4;
  text-align: center;
  font-size: 29px;
  line-height: 37px;
  color: #111;
  white-space: nowrap;
  overflow: hidden;
}
.cell.bold { font-weight: 700; }
.filter {
  position: absolute;
  right: 0;
  top: 1px;
  width: 33px;
  height: 34px;
  box-sizing: border-box;
  background: #fff;
  border: 1px solid #bdbdbd;
  display: flex;
  align-items: center;
  justify-content: center;
}
.filter .caret { border-left-width: 6px; border-right-width: 6px; border-top-width: 8px; }
.cell.active {
  overflow: visible;
  outline: 3px solid #217346;
  outline-offset: -1px;
  z-index: 1;
}
.cell.active::after {
  content: "";
  position: absolute;
  right: -5px;
  bottom: -4px;
  width: 7px;
  height: 7px;
  background: #217346;
  border: 1px solid #fff;
}

/* ---- gallery popup ---- */
.gallery {
  position: absolute;
  left: 1422px;
  top: 285px;
  width: 1309px;
  height: 905px;
  box-sizing: border-box;
  background: #fff;
  border: 1px solid #c6c6c6;
  box-shadow: 2px 3px 4px rgba(0, 0, 0, 0.18);
}
.sec {
  width: 1273px;
  height: 38px;
  box-sizing: border-box;
  padding-left: 11px;
  background: #ebebeb;
  font-size: 24px;
  font-weight: 700;
  line-height: 36px;
  color: #5f5f5f;
}
.custom-row {
  height: 56px;
  padding-left: 17px;
  font-size: 29px;
  line-height: 56px;
  letter-spacing: 2px;
  color: #111;
}
.tiles {
  display: grid;
  grid-template-columns: repeat(6, 200px);
  column-gap: 12px;
  row-gap: 12px;
  padding: 6px 0 6px 7px;
}
.tile {
  height: 44px;
  box-sizing: border-box;
  padding-left: 9px;
  font-size: 29px;
  line-height: 42px;
  color: #111;
  white-space: nowrap;
  overflow: hidden;
}
.tile.selected { outline: 6px solid #c4c4c4; overflow: visible; }
.bad { background: #ffc7ce; color: #9c0006; }
.good { background: #c6efce; color: #006100; }
.neutral { background: #ffeb9c; color: #9c5700; }
.link { color: #0000ff; text-decoration: underline; }
.visited { color: #800080; text-decoration: underline; font-size: 28px; }
.calc { background: #f2f2f2; border: 2px solid #7f7f7f; color: #fa7d00; font-weight: 700; padding-left: 7px; line-height: 38px; }
.check { background: #a5a5a5; border: 4px double #3f3f3f; color: #fff; font-weight: 700; padding-left: 5px; line-height: 36px; }
.explain { color: #7f7f7f; font-style: italic; }
.warn { color: #ff0000; }
.linked { color: #fa7d00; border-bottom: 4px double #fa7d00; }
.output { background: #f2f2f2; border: 2px solid #3f3f3f; color: #3f3f3f; font-weight: 700; padding-left: 7px; line-height: 38px; }
.input { background: #ffcc99; border: 2px solid #7f7f7f; color: #3f3f76; padding-left: 7px; line-height: 38px; }
.note { background: #ffffcc; border: 2px solid #b2b2b2; padding-left: 7px; line-height: 38px; }
.h0 { font-size: 44px; font-weight: 700; color: #44546a; line-height: 40px; }
.h1 { font-size: 36px; font-weight: 700; color: #44546a; border-bottom: 4px solid #5b9bd5; line-height: 38px; }
.h2 { font-size: 32px; font-weight: 700; color: #44546a; border-bottom: 4px solid #5b9bd5; line-height: 38px; }
.h3 { font-size: 26px; font-weight: 700; color: #44546a; border-bottom: 4px solid #acccea; line-height: 40px; }
.h4 { font-size: 26px; font-weight: 700; color: #44546a; line-height: 40px; }
.total { font-weight: 700; font-size: 27px; border-top: 2px solid #5b9bd5; border-bottom: 4px double #5b9bd5; line-height: 36px; }
.theme .tile { font-size: 28px; }
.theme .tile.light { color: #fff; }
.numbers { padding: 6px 0 0 7px; height: 46px; }
.menu-sep { height: 1px; margin-top: 4px; margin-bottom: 1px; background: #dcdcdc; }
.menu-item {
  display: flex;
  align-items: center;
  height: 48px;
  padding-left: 8px;
  gap: 13px;
  font-size: 24px;
  color: #555;
}
.menu-item.hot { background: #c4c4c4; }
.grip { position: absolute; right: 3px; bottom: 3px; }
.az-a { font: bold 40px "Liberation Sans", sans-serif; fill: #4f81bd; }
.az-z { font: bold 40px "Liberation Sans", sans-serif; fill: #9b6bbd; }

.watermark {
  position: absolute;
  right: 10px;
  bottom: 6px;
  font-size: 18px;
  color: rgba(215, 215, 215, 0.6);
}
</style>
